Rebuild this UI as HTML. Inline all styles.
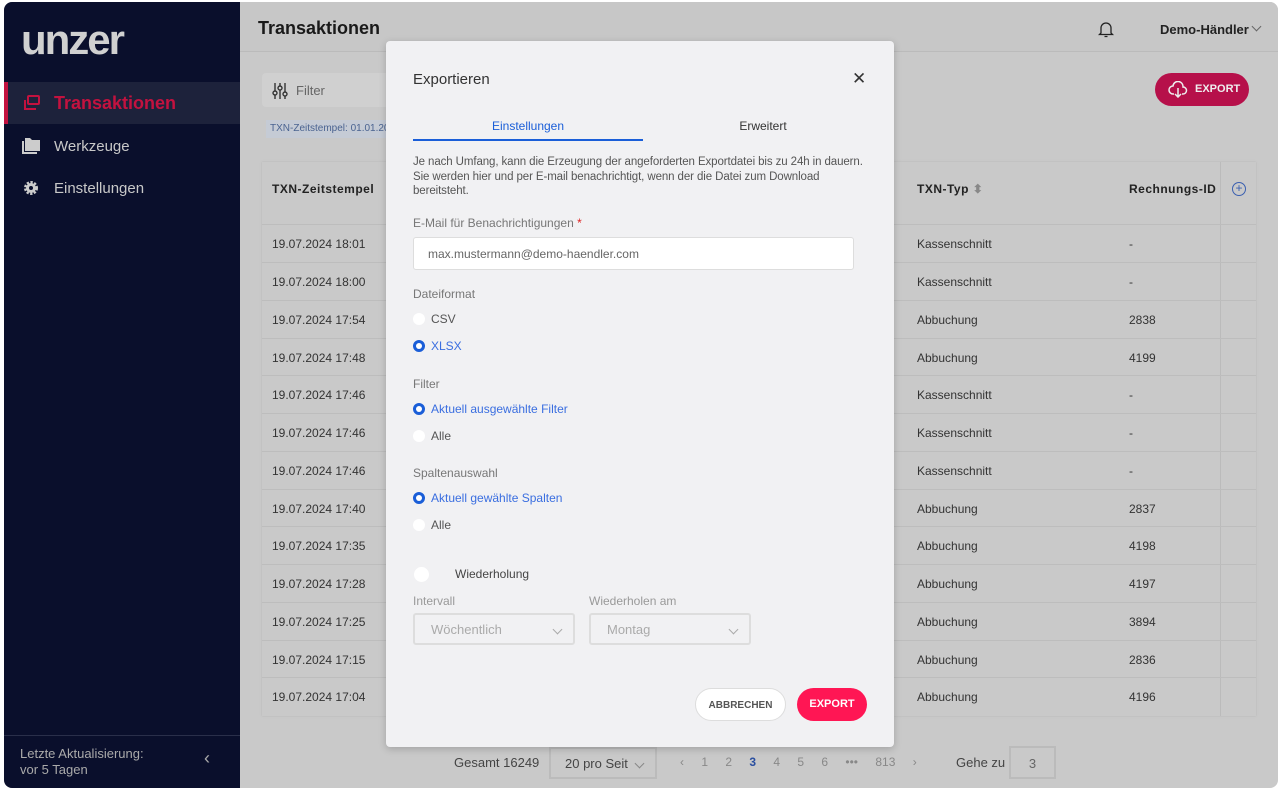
<!DOCTYPE html>
<html><head><meta charset="utf-8"><style>
*{box-sizing:border-box;margin:0;padding:0}
body{width:1280px;height:791px;background:#fff;font-family:"Liberation Sans",sans-serif;position:relative;overflow:hidden;color:#222}
.frame{position:absolute;left:4px;top:2px;width:1274px;height:786px;border-radius:8px;overflow:hidden;background:#c9c9c9}
.side{position:absolute;left:0;top:0;width:236px;height:786px;background:#0a0f2c}
.logo{position:absolute;left:17px;top:14px;font-size:42px;font-weight:bold;color:#d0d0d0;letter-spacing:-2px}
.nav{position:absolute;left:0;width:236px;height:42px;color:#c8c8c8;font-size:15px;display:flex;align-items:center;padding-left:50px}
.nav.act{background:#1d223b;color:#c3123f;font-weight:bold;font-size:18px;border-left:4px solid #c3123f;padding-left:46px}
.ico{position:absolute;left:18px;width:18px;height:16px}
.foot{position:absolute;left:0;top:733px;width:236px;border-top:1px solid #2a2f4a;padding:10px 16px;color:#aaa;font-size:13px;line-height:16px}
.top{position:absolute;left:236px;top:0;right:0;height:50px;background:#c7c7c7;border-bottom:1px solid #bbb}
.abs{position:absolute;white-space:nowrap}
.card{position:absolute;left:258px;top:160px;width:994px;height:554px;background:#c9c9c9;box-shadow:0 0 2px #b5b5b5}
.row{position:absolute;left:0;width:994px;height:38px;border-top:1px solid #bdbdbd;font-size:12px;color:#333}
.row span{position:absolute;top:12px}
.modal{position:absolute;left:382px;top:39px;width:508px;height:706px;background:#f1f1f3;border-radius:4px;box-shadow:0 2px 8px rgba(0,0,0,.2)}
.m{position:absolute;font-size:12px;color:#777;white-space:nowrap}
.radio{position:absolute;width:12px;height:12px;border-radius:50%;background:#fff}
.radio.on{background:#1a5ed8;border:3px solid #1a5ed8}
.radio.on::after{content:"";position:absolute;left:0;top:0;width:6px;height:6px;border-radius:50%;background:#fff}
.sel{position:absolute;height:32px;border:2px solid #ddd;border-radius:3px;font-size:13px;color:#aaa;padding:7px 16px;white-space:nowrap}
.chev{position:absolute;right:12px;top:11px;width:7px;height:7px;border-right:1px solid #aaa;border-bottom:1px solid #aaa;transform:rotate(45deg)}
</style></head><body><div class="frame">
<div class="side">
<div class="logo">unzer</div>
<div class="nav act" style="top:80px"><svg class="ico" style="left:14px" viewBox="0 0 18 16" fill="none" stroke="#c3123f" stroke-width="2"><rect x="6" y="1" width="11" height="8" rx="1"/><path d="M3 5v9h11"/></svg>Transaktionen</div>
<div class="nav" style="top:123px"><svg class="ico" viewBox="0 0 18 16" fill="#ccc"><path d="M0 3h2v11h13v2H0z"/><path d="M3 0h5l2 2h8v11H3z"/></svg>Werkzeuge</div>
<div class="nav" style="top:165px"><svg class="ico" viewBox="0 0 16 16"><circle cx="8" cy="8" r="5.5" fill="none" stroke="#ccc" stroke-width="3" stroke-dasharray="2.2 1.4"/><circle cx="8" cy="8" r="5" fill="#ccc"/><circle cx="8" cy="8" r="2" fill="#0a0f2c"/></svg>Einstellungen</div>
<div class="foot">Letzte Aktualisierung:<br>vor 5 Tagen<span style="position:absolute;right:30px;top:14px;font-size:18px">‹</span></div>
</div>
<div class="top"><div class="abs" style="left:18px;top:16px;font-size:18px;font-weight:bold;color:#1a1a1a">Transaktionen</div>
<svg class="abs" style="left:858px;top:18px" width="16" height="18" viewBox="0 0 16 18" fill="none" stroke="#222" stroke-width="1.3"><path d="M3 13V8a5 5 0 0 1 10 0v5l1.5 1.5h-13z"/><path d="M6.5 16.5h3"/></svg>
<div class="abs" style="left:920px;top:20px;font-size:13px;font-weight:bold">Demo-Händler</div><div class="chev" style="left:1013px;top:21px;right:auto;border-color:#666"></div></div>
<div class="abs" style="left:258px;top:71px;width:130px;height:34px;background:#d0d0d0;border-radius:4px;font-size:13px;color:#666;padding:10px 34px">Filter</div>
<svg class="abs" style="left:268px;top:80px" width="16" height="18" viewBox="0 0 16 18" stroke="#333" stroke-width="1.4" fill="#d0d0d0"><path d="M3 1v16M8 1v16M13 1v16"/><circle cx="3" cy="11" r="2"/><circle cx="8" cy="6" r="2"/><circle cx="13" cy="12" r="2"/></svg>
<div class="abs" style="left:262px;top:118px;width:124px;height:18px;background:#c5cbd5;font-size:10px;color:#4a6390;padding:3px 4px;overflow:hidden">TXN-Zeitstempel: 01.01.202</div>
<div class="abs" style="left:1151px;top:71px;width:94px;height:33px;border-radius:17px;background:#b6104a;color:#eee;font-size:11px;font-weight:bold;padding:10px 0 0 40px">EXPORT</div>
<svg class="abs" style="left:1164px;top:79px" width="20" height="17" viewBox="0 0 20 17" fill="none" stroke="#eee" stroke-width="1.5"><path d="M6 13H5a4 4 0 0 1 0-8 5 5 0 0 1 10 1 3.5 3.5 0 0 1 0 7h-1"/><path d="M10 7v9M7 13l3 3 3-3"/></svg>
<div class="card">
<div class="abs" style="left:10px;top:20px;font-size:12px;font-weight:bold;letter-spacing:.5px">TXN-Zeitstempel</div>
<div class="abs" style="left:655px;top:20px;font-size:12px;font-weight:bold;letter-spacing:.5px">TXN-Typ <span style="color:#888">⬍</span></div>
<div class="abs" style="left:867px;top:20px;font-size:12px;font-weight:bold;letter-spacing:.5px">Rechnungs-ID</div>
<div class="abs" style="left:958px;top:0;width:36px;height:554px;border-left:1px solid #bbb"></div>
<div class="abs" style="left:970px;top:20px;width:14px;height:14px;border:1px solid #3a5fb0;border-radius:50%;color:#3a5fb0;font-size:12px;line-height:11px;text-align:center">+</div>
<div class="row" style="top:62px"><span style="left:10px">19.07.2024 18:01</span><span style="left:655px">Kassenschnitt</span><span style="left:867px">-</span></div>
<div class="row" style="top:100px"><span style="left:10px">19.07.2024 18:00</span><span style="left:655px">Kassenschnitt</span><span style="left:867px">-</span></div>
<div class="row" style="top:138px"><span style="left:10px">19.07.2024 17:54</span><span style="left:655px">Abbuchung</span><span style="left:867px">2838</span></div>
<div class="row" style="top:176px"><span style="left:10px">19.07.2024 17:48</span><span style="left:655px">Abbuchung</span><span style="left:867px">4199</span></div>
<div class="row" style="top:213px"><span style="left:10px">19.07.2024 17:46</span><span style="left:655px">Kassenschnitt</span><span style="left:867px">-</span></div>
<div class="row" style="top:251px"><span style="left:10px">19.07.2024 17:46</span><span style="left:655px">Kassenschnitt</span><span style="left:867px">-</span></div>
<div class="row" style="top:289px"><span style="left:10px">19.07.2024 17:46</span><span style="left:655px">Kassenschnitt</span><span style="left:867px">-</span></div>
<div class="row" style="top:327px"><span style="left:10px">19.07.2024 17:40</span><span style="left:655px">Abbuchung</span><span style="left:867px">2837</span></div>
<div class="row" style="top:364px"><span style="left:10px">19.07.2024 17:35</span><span style="left:655px">Abbuchung</span><span style="left:867px">4198</span></div>
<div class="row" style="top:402px"><span style="left:10px">19.07.2024 17:28</span><span style="left:655px">Abbuchung</span><span style="left:867px">4197</span></div>
<div class="row" style="top:440px"><span style="left:10px">19.07.2024 17:25</span><span style="left:655px">Abbuchung</span><span style="left:867px">3894</span></div>
<div class="row" style="top:478px"><span style="left:10px">19.07.2024 17:15</span><span style="left:655px">Abbuchung</span><span style="left:867px">2836</span></div>
<div class="row" style="top:515px"><span style="left:10px">19.07.2024 17:04</span><span style="left:655px">Abbuchung</span><span style="left:867px">4196</span></div>
</div>
<div class="abs" style="left:450px;top:753px;font-size:13px;color:#444">Gesamt 16249</div>
<div class="abs" style="left:545px;top:745px;width:108px;height:32px;border:2px solid #bbb;font-size:13px;color:#444;padding:7px 14px">20 pro Seit<div class="chev" style="border-color:#888"></div></div>
<div class="abs" style="left:676px;top:753px;font-size:12px;color:#888;word-spacing:14px">‹ 1 2 <b style="color:#2a4fa0">3</b> 4 5 6 ••• 813 ›</div>
<div class="abs" style="left:952px;top:753px;font-size:13px;color:#444">Gehe zu</div>
<div class="abs" style="left:1005px;top:744px;width:47px;height:33px;border:2px solid #bbb;font-size:13px;color:#666;text-align:center;padding-top:8px">3</div>

<div class="modal">
<div class="m" style="left:27px;top:30px;font-size:15px;color:#333">Exportieren</div>
<div class="m" style="left:466px;top:28px;font-size:17px;color:#333">✕</div>
<div class="m" style="left:27px;top:78px;width:230px;text-align:center;color:#1a5ed8">Einstellungen</div>
<div class="abs" style="left:27px;top:98px;width:230px;height:2px;background:#1a5ed8"></div>
<div class="m" style="left:257px;top:78px;width:240px;text-align:center;color:#333">Erweitert</div>
<div class="m" style="left:27px;top:114px;width:460px;line-height:14.5px;color:#555;font-size:11.5px;white-space:normal;letter-spacing:-.1px">Je nach Umfang, kann die Erzeugung der angeforderten Exportdatei bis zu 24h in dauern.<br>Sie werden hier und per E-mail benachrichtigt, wenn der die Datei zum Download<br>bereitsteht.</div>
<div class="m" style="left:27px;top:175px">E-Mail für Benachrichtigungen <span style="color:#d22">*</span></div>
<div class="abs" style="left:27px;top:196px;width:441px;height:33px;background:#fff;border:1px solid #ddd;border-radius:3px;font-size:12px;color:#666;padding:9px 14px">max.mustermann@demo-haendler.com</div>
<div class="m" style="left:27px;top:246px">Dateiformat</div>
<div class="radio" style="left:27px;top:272px"></div><div class="m" style="left:45px;top:271px;color:#555">CSV</div>
<div class="radio on" style="left:27px;top:299px"></div><div class="m" style="left:45px;top:298px;color:#3a6ee0">XLSX</div>
<div class="m" style="left:27px;top:336px">Filter</div>
<div class="radio on" style="left:27px;top:362px"></div><div class="m" style="left:45px;top:361px;color:#3a6ee0">Aktuell ausgewählte Filter</div>
<div class="radio" style="left:27px;top:389px"></div><div class="m" style="left:45px;top:388px;color:#555">Alle</div>
<div class="m" style="left:27px;top:425px">Spaltenauswahl</div>
<div class="radio on" style="left:27px;top:451px"></div><div class="m" style="left:45px;top:450px;color:#3a6ee0">Aktuell gewählte Spalten</div>
<div class="radio" style="left:27px;top:478px"></div><div class="m" style="left:45px;top:477px;color:#555">Alle</div>
<div class="radio" style="left:28px;top:526px;width:15px;height:15px"></div><div class="m" style="left:69px;top:526px;color:#444">Wiederholung</div>
<div class="m" style="left:27px;top:553px;color:#999">Intervall</div>
<div class="m" style="left:203px;top:553px;color:#999">Wiederholen am</div>
<div class="sel" style="left:27px;top:572px;width:162px">Wöchentlich<div class="chev"></div></div>
<div class="sel" style="left:203px;top:572px;width:162px">Montag<div class="chev"></div></div>
<div class="abs" style="left:309px;top:647px;width:91px;height:33px;border:1px solid #ddd;border-radius:17px;background:#fff;font-size:10px;font-weight:bold;color:#555;text-align:center;padding-top:11px">ABBRECHEN</div>
<div class="abs" style="left:411px;top:647px;width:70px;height:33px;border-radius:17px;background:#ff1654;font-size:11px;font-weight:bold;color:#fff;text-align:center;padding-top:10px">EXPORT</div>
</div>
</div></body></html>
